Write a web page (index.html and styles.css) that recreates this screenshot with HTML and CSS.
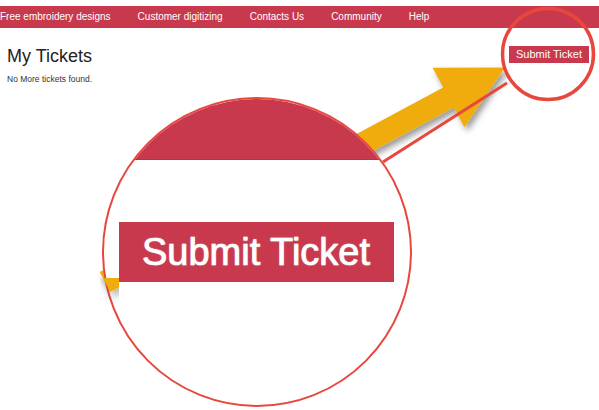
FILE: index.html
```html
<!DOCTYPE html>
<html lang="en">
<head>
<meta charset="utf-8">
<title>My Tickets</title>
<link rel="stylesheet" href="styles.css">
</head>
<body>
<nav class="topnav">
  <a href="#">Free embroidery designs</a>
  <a href="#">Customer digitizing</a>
  <a href="#">Contacts Us</a>
  <a href="#">Community</a>
  <a href="#">Help</a>
</nav>
<main class="content">
  <div class="head">
    <h1 class="title">My Tickets</h1>
    <a class="btn" href="#">Submit Ticket</a>
  </div>
  <p class="empty">No More tickets found.</p>
</main>

<svg class="overlay overlay-under" width="599" height="410" viewBox="0 0 599 410" aria-hidden="true">
  <defs>
    <filter id="shadow" x="-20%" y="-20%" width="140%" height="140%">
      <feDropShadow dx="3" dy="4" stdDeviation="3" flood-color="#000" flood-opacity="0.4"/>
    </filter>
  </defs>
  <polygon class="arrow" filter="url(#shadow)"
    points="99.7,272 443.2,87.5 432.6,67.7 505,67.5 464.4,127.3 453.8,107.5 110.3,292"/>
</svg>

<div class="zoom">
  <div class="zoom-band"></div>
  <div class="zoom-btn">Submit Ticket</div>
</div>

<svg class="overlay overlay-over" width="599" height="410" viewBox="0 0 599 410" aria-hidden="true">
  <defs>
    <filter id="shadow2" x="-50%" y="-50%" width="200%" height="200%">
      <feDropShadow dx="3" dy="5" stdDeviation="4" flood-color="#000" flood-opacity="0.3"/>
    </filter>
    <clipPath id="tailclip">
      <rect x="100" y="278" width="19" height="30"/>
    </clipPath>
  </defs>
  <g clip-path="url(#tailclip)">
    <polygon class="arrow" filter="url(#shadow2)"
      points="99.7,272 443.2,87.5 432.6,67.7 505,67.5 464.4,127.3 453.8,107.5 110.3,292"/>
  </g>
  <line class="callout-line" x1="507" y1="83" x2="383" y2="162"/>
  <circle class="lens" cx="548" cy="54" r="45.5"/>
</svg>
</body>
</html>
```

FILE: styles.css
```css
html, body {
  margin: 0;
  padding: 0;
  background: #ffffff;
}

body {
  position: relative;
  width: 599px;
  height: 410px;
  overflow: hidden;
  font-family: "Liberation Sans", Arial, sans-serif;
  color: #222222;
}

.topnav {
  margin-top: 6px;
  height: 22px;
  background: #c8394e;
  display: flex;
  align-items: center;
  gap: 27px;
  padding-left: 0;
}

.topnav a {
  color: #ffffff;
  text-decoration: none;
  font-size: 10px;
  line-height: 22px;
  white-space: nowrap;
}

.content {
  padding: 0 10px 0 7px;
}

.head {
  margin-top: 18px;
  display: flex;
  justify-content: space-between;
  align-items: flex-start;
}

.title {
  margin: 0;
  font-size: 18px;
  line-height: 20px;
  font-weight: normal;
  color: #222222;
}

.btn {
  display: block;
  background: #c8394e;
  color: #ffffff;
  text-decoration: none;
  font-size: 11px;
  line-height: 17px;
  height: 17px;
  padding: 0 7px;
}

.empty {
  margin: 8px 0 0;
  font-size: 8.5px;
  line-height: 10px;
  color: #333333;
}

.overlay {
  position: absolute;
  left: 0;
  top: 0;
  pointer-events: none;
}

.overlay-under {
  z-index: 1;
}

.overlay-over {
  z-index: 3;
}

.arrow {
  fill: #f0ac10;
}

.callout-line {
  stroke: #e8473e;
  stroke-width: 3;
}

.lens {
  fill: none;
  stroke: #e8473e;
  stroke-width: 3.5;
}

.zoom {
  position: absolute;
  z-index: 2;
  left: 102px;
  top: 97px;
  width: 310px;
  height: 310px;
  box-sizing: border-box;
  border: 2.5px solid #e8473e;
  border-radius: 50%;
  overflow: hidden;
  background: #ffffff;
}

.zoom-band {
  height: 61px;
  background: #c8394e;
  border-bottom: 1px solid #bb2f47;
  box-sizing: border-box;
}

.zoom-btn {
  margin: 61.5px 0 0 14.5px;
  width: 275px;
  height: 60px;
  background: #c8394e;
  color: #ffffff;
  font-size: 38px;
  line-height: 60px;
  text-align: center;
  white-space: nowrap;
  -webkit-text-stroke: 0.7px #ffffff;
  text-shadow: 0 0 1.5px rgba(255, 255, 255, 0.7);
}
```
